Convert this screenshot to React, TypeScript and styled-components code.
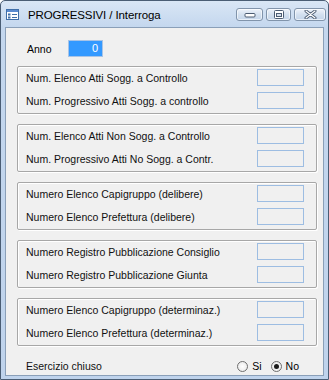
import React from "react";
import styled, { createGlobalStyle } from "styled-components";

const GlobalStyle = createGlobalStyle`
  html, body {
    margin: 0;
    padding: 0;
    background: #ffffff;
  }
  * {
    box-sizing: border-box;
  }
`;

const Window = styled.div`
  width: 329px;
  height: 380px;
  display: flex;
  flex-direction: column;
  border: 1px solid #4a5d74;
  border-radius: 5px 5px 0 0;
  background: linear-gradient(#d9e6f5 0px, #c4d7ee 26px, #bfd3ec 100%);
  padding: 0 4px 3px 4px;
  font-family: "Liberation Sans", Arial, sans-serif;
  color: #000;
`;

const TitleBar = styled.div`
  height: 26px;
  display: flex;
  align-items: center;
  padding-left: 1px;
`;

const TitleText = styled.span`
  margin-left: 9px;
  font-size: 11.5px;
  letter-spacing: -0.1px;
  padding-top: 1px;
`;

const CaptionButtons = styled.div`
  margin-left: auto;
  margin-right: -2px;
  display: flex;
  gap: 3px;
  align-self: flex-start;
  margin-top: 7px;
`;

const CaptionButton = styled.div<{ $w: number }>`
  width: ${(p) => p.$w}px;
  height: 13px;
  border: 1px solid #8194ab;
  border-radius: 3px;
  background: linear-gradient(#eef3fa, #d3e0ef 50%, #c4d5ea);
  box-shadow: inset 0 0 0 1px rgba(255, 255, 255, 0.6);
  display: flex;
  align-items: center;
  justify-content: center;
`;

const Client = styled.div`
  flex: 1;
  background: #f0f0f0;
  border: 1px solid #8a9fb8;
  padding: 12px 6px 0 11px;
  display: flex;
  flex-direction: column;
  font-size: 10.5px;
`;

const AnnoRow = styled.div`
  display: flex;
  align-items: center;
  height: 17px;
  padding-left: 10px;
`;

const AnnoLabel = styled.span`
  width: 41px;
`;

const Field = styled.div<{ $selected?: boolean; $w?: number }>`
  width: ${(p) => p.$w ?? 47}px;
  height: 17px;
  border: 1px solid ${(p) => (p.$selected ? "#a9c4e6" : "#9dbde2")};
  background: ${(p) => (p.$selected ? "#3399ff" : "#f0f0f0")};
  color: #fff;
  text-align: right;
  padding-right: 4px;
  line-height: 15px;
  font-size: 11px;
`;

const Groups = styled.div`
  margin-top: 9px;
  display: flex;
  flex-direction: column;
  gap: 10px;
`;

const Group = styled.div`
  height: 48px;
  border: 1px solid #a7a7a7;
  border-radius: 2px;
  box-shadow: inset 1px 1px 0 #ffffff, 1px 1px 0 #ffffff;
  padding: 2px 12px 4px 8px;
  display: flex;
  flex-direction: column;
  gap: 6px;
`;

const Row = styled.div`
  height: 17px;
  display: flex;
  align-items: center;
  justify-content: space-between;
`;

const Label = styled.span`
  white-space: nowrap;
  color: #111;
`;

const BottomRow = styled.div`
  margin-top: 12px;
  height: 16px;
  display: flex;
  align-items: center;
  padding-left: 9px;
  padding-right: 18px;
`;

const Radios = styled.div`
  margin-left: auto;
  display: flex;
  align-items: center;
  gap: 9px;
`;

const RadioItem = styled.label`
  display: flex;
  align-items: center;
  gap: 4px;
`;

const RadioCircle = styled.span<{ $checked?: boolean }>`
  width: 11px;
  height: 11px;
  border-radius: 50%;
  border: 1px solid #6f6f6f;
  background: radial-gradient(circle, #ffffff 0%, #e6e6e6 100%);
  display: flex;
  align-items: center;
  justify-content: center;
  &::after {
    content: "";
    display: ${(p) => (p.$checked ? "block" : "none")};
    width: 5px;
    height: 5px;
    border-radius: 50%;
    background: #1c1c1c;
  }
`;

const groups: string[][] = [
  ["Num. Elenco Atti Sogg. a Controllo", "Num. Progressivo Atti Sogg. a controllo"],
  ["Num. Elenco Atti Non Sogg. a Controllo", "Num. Progressivo Atti No Sogg. a Contr."],
  ["Numero Elenco Capigruppo (delibere)", "Numero Elenco Prefettura (delibere)"],
  ["Numero Registro Pubblicazione Consiglio", "Numero Registro Pubblicazione Giunta"],
  ["Numero Elenco Capigruppo (determinaz.)", "Numero Elenco Prefettura (determinaz.)"],
];

const FormIcon = () => (
  <svg width="13" height="11" viewBox="0 0 13 11">
    <rect x="0.5" y="0.5" width="12" height="10" fill="#ffffff" stroke="#3f6ea8" />
    <rect x="1" y="1" width="11" height="2" fill="#5b8bd0" />
    <rect x="2" y="4.5" width="2.5" height="2" fill="#3f6ea8" />
    <rect x="2" y="7.5" width="2.5" height="2" fill="#3f6ea8" />
    <line x1="6" y1="5.5" x2="11" y2="5.5" stroke="#3f6ea8" />
    <line x1="6" y1="8.5" x2="11" y2="8.5" stroke="#3f6ea8" />
  </svg>
);

const MinIcon = () => (
  <svg width="12" height="7" viewBox="0 0 12 7">
    <rect x="1" y="2.5" width="10" height="3.5" rx="1" fill="#ffffff" stroke="#4c5c72" />
  </svg>
);

const MaxIcon = () => (
  <svg width="10" height="9" viewBox="0 0 10 9">
    <rect x="0.5" y="0.5" width="9" height="8" rx="1" fill="#ffffff" stroke="#4c5c72" />
    <rect x="2.5" y="3.5" width="5" height="3" fill="#d4deea" stroke="#4c5c72" />
  </svg>
);

const CloseIcon = () => (
  <svg width="13" height="9" viewBox="0 0 13 9">
    <path d="M2 1 L11 8 M11 1 L2 8" stroke="#4c5c72" strokeWidth="3" strokeLinecap="round" />
    <path d="M2 1 L11 8 M11 1 L2 8" stroke="#ffffff" strokeWidth="1.2" strokeLinecap="round" />
  </svg>
);

const App: React.FC = () => {
  return (
    <>
      <GlobalStyle />
      <Window>
        <TitleBar>
          <FormIcon />
          <TitleText>PROGRESSIVI / Interroga</TitleText>
          <CaptionButtons>
            <CaptionButton $w={27}>
              <MinIcon />
            </CaptionButton>
            <CaptionButton $w={25}>
              <MaxIcon />
            </CaptionButton>
            <CaptionButton $w={32}>
              <CloseIcon />
            </CaptionButton>
          </CaptionButtons>
        </TitleBar>
        <Client>
          <AnnoRow>
            <AnnoLabel>Anno</AnnoLabel>
            <Field $selected $w={35}>
              0
            </Field>
          </AnnoRow>
          <Groups>
            {groups.map((g, i) => (
              <Group key={i}>
                {g.map((label) => (
                  <Row key={label}>
                    <Label>{label}</Label>
                    <Field />
                  </Row>
                ))}
              </Group>
            ))}
          </Groups>
          <BottomRow>
            <Label>Esercizio chiuso</Label>
            <Radios>
              <RadioItem>
                <RadioCircle />
                Si
              </RadioItem>
              <RadioItem>
                <RadioCircle $checked />
                No
              </RadioItem>
            </Radios>
          </BottomRow>
        </Client>
      </Window>
    </>
  );
};

export default App;
